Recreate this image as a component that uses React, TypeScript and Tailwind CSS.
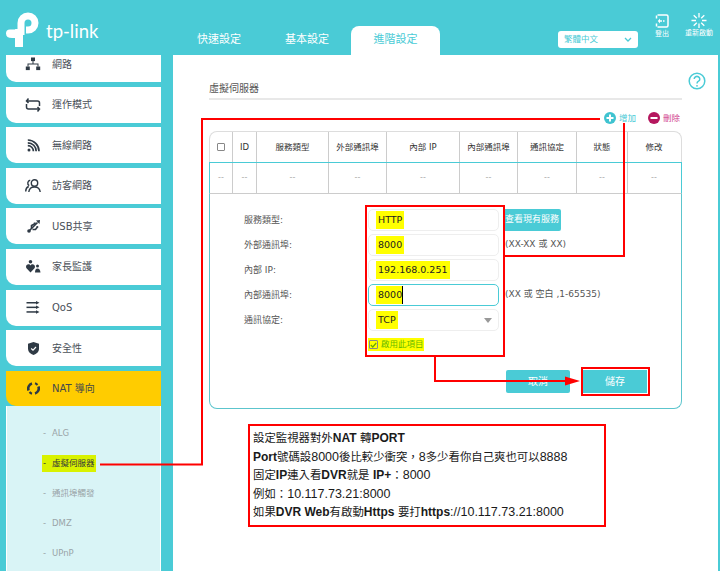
import React from "react";

const cjk = '"DejaVu Sans","Noto Sans CJK TC",sans-serif';

function NetIcon() {
  return (
    <svg width="16" height="14" viewBox="0 0 16 14" fill="#2f3a45">
      <rect x="6" y="0.5" width="4" height="3.6" />
      <rect x="0.8" y="9.5" width="4" height="3.6" />
      <rect x="11.2" y="9.5" width="4" height="3.6" />
      <path d="M7.5 4h1v2.5h5v3h-1v-2H3.5v2h-1v-3h5z" />
    </svg>
  );
}
function ModeIcon() {
  return (
    <svg width="16" height="14" viewBox="0 0 16 14" fill="none" stroke="#2f3a45" strokeWidth="1.5">
      <path d="M3.5 0.5 1.5 3l2 2M2 3h10.5q2 0 2 2v3" />
      <path d="M12.5 13.5l2-2.5-2-2M14 11H3.5q-2 0-2-2V6" />
    </svg>
  );
}
function WifiIcon() {
  return (
    <svg width="13" height="13" viewBox="0 0 13 13" fill="none" stroke="#2f3a45" strokeWidth="1.7">
      <circle cx="2" cy="11" r="1.5" fill="#2f3a45" stroke="none" />
      <path d="M0.8 6.6a5.6 5.6 0 0 1 5.6 5.6M0.8 3.8a8.4 8.4 0 0 1 8.4 8.4M0.8 1a11.2 11.2 0 0 1 11.2 11.2" />
    </svg>
  );
}
function GuestIcon() {
  return (
    <svg width="16" height="14" viewBox="0 0 16 14" fill="none" stroke="#2f3a45" strokeWidth="1.4">
      <circle cx="9.5" cy="4" r="3.2" />
      <path d="M3.8 13q0.5-5 5.7-5t5.7 5" />
      <path d="M5.2 1.2a3 3 0 0 0-1 5.5M0.7 12.5q0-3.8 3-5" />
    </svg>
  );
}
function UsbIcon() {
  return (
    <svg width="13" height="13" viewBox="0 0 13 13" fill="none" stroke="#2f3a45" strokeWidth="1.6">
      <circle cx="2" cy="11" r="1.8" fill="#2f3a45" stroke="none" />
      <path d="M2 11 10.500 2.500" />
      <path d="M4.500 8.500V5.500L7.500 4" />
      <path d="M5.500 9.500H8.500L10 7.500" />
      <path d="M9 0.500 13 0 12.500 4z" fill="#2f3a45" stroke="none" />
      <rect x="6.800" y="2.500" width="2" height="2" fill="#2f3a45" stroke="none" />
      <circle cx="10.300" cy="7" r="1.100" fill="#2f3a45" stroke="none" />
    </svg>
  );
}
function FamilyIcon() {
  return (
    <svg width="15" height="13" viewBox="0 0 15 13" fill="#2f3a45">
      <circle cx="4.500" cy="1.800" r="1.800" />
      <path d="M4.500 12.500 0.500 8.300C-0.700 6.600 0.500 4.300 2.500 4.300 3.500 4.300 4 4.800 4.500 5.500 5 4.800 5.600 4.300 6.500 4.300 8.500 4.300 9.700 6.600 8.500 8.300z" />
      <circle cx="11.500" cy="6" r="1.500" />
      <path d="M9 12.500q0-4 2.500-4t3 4z" />
    </svg>
  );
}
function QosIcon() {
  return (
    <svg width="14" height="13" viewBox="0 0 14 13" fill="#2f3a45">
      <rect x="0.500" y="1" width="10" height="1.500" />
      <path d="M10 0l3.500 1.700L10 3.400z" />
      <rect x="0.500" y="5.600" width="10" height="1.500" />
      <path d="M10 4.600l3.500 1.700L10 8z" />
      <rect x="0.500" y="10.200" width="10" height="1.500" />
      <path d="M10 9.300l3.500 1.700L10 12.700z" />
    </svg>
  );
}
function ShieldIcon() {
  return (
    <svg width="11" height="13" viewBox="0 0 11 13">
      <path d="M5.500 0 11 1.800v5.200C11 10 8.500 12 5.500 13 2.500 12 0 10 0 7V1.800z" fill="#2f3a45" />
      <path d="M3.200 6.500 5 8.200 8 5" fill="none" stroke="#fff" strokeWidth="1.200" />
    </svg>
  );
}
function NatIcon() {
  return (
    <svg width="13" height="13" viewBox="0 0 13 13" fill="none" stroke="#2f3a45" strokeWidth="2.600">
      <path d="M1.600 8.500A5.200 5.200 0 0 1 5 1.600" />
      <path d="M11.400 4.500A5.200 5.200 0 0 1 8 11.400" />
      <path d="M8 1.300 A5.200 5.200 0 0 1 10.500 3" strokeWidth="2" />
      <path d="M5 11.700A5.200 5.200 0 0 1 2.500 10" strokeWidth="2" />
    </svg>
  );
}

function SideItem({ icon, label }: { icon: React.ReactNode; label: React.ReactNode }) {
  return (
    <div className="h-9 w-[155px] shrink-0 bg-white rounded-bl-[10px] flex items-center text-[10px] text-[#4a5058]">
      <div className="w-[46px] pl-[10px] pr-[2px] flex justify-center shrink-0">{icon}</div>
      <span>{label}</span>
    </div>
  );
}

function Sub({ label, active }: { label: string; active?: boolean }) {
  return (
    <div className="h-[30px] flex items-center pl-[35px]">
      <div
        className={
          active
            ? "bg-[#d9f200] flex items-center h-[17px] pl-[1px] pr-[1px] text-[#33373a]"
            : "flex items-center pl-[1px] text-[#9aa4a8]"
        }
      >
        <span className="w-[9px]">-</span>
        <span>{label}</span>
      </div>
    </div>
  );
}

function Y({ children }: { children: React.ReactNode }) {
  return <span className="bg-[#ffff00] px-[2px] py-[1.500px] text-[#222]">{children}</span>;
}

function Row({ label, children, hint, focus }: { label: string; children: React.ReactNode; hint?: React.ReactNode; focus?: boolean }) {
  return (
    <div className="flex items-center h-[22px]">
      <div className="w-[125px] pl-[1px] pt-[1px] text-[9px] text-[#555]">{label}</div>
      <div
        className={
          focus
            ? "w-[131px] h-[22px] bg-white rounded-[5px] border border-[#4acbd6] flex items-center pl-[7px] text-[9.500px]"
            : "w-[131px] h-[22px] bg-white rounded-[5px] border border-[#eeeeee] flex items-center pl-[7px] text-[9.500px]"
        }
      >
        {children}
      </div>
      {hint}
    </div>
  );
}

function C({ children }: { children: React.ReactNode }) {
  return <span className="text-[11.400px]">{children}</span>;
}

function B({ children }: { children: React.ReactNode }) {
  return <b className="text-[12px]">{children}</b>;
}

const cols: [number, string][] = [
  [23, ""],
  [24, "ID"],
  [72, "服務類型"],
  [58, "外部通訊埠"],
  [73, "內部 IP"],
  [58, "內部通訊埠"],
  [59, "通訊協定"],
  [51, "狀態"],
  [52, "修改"],
];

export default function App() {
  return (
    <div className="relative w-[720px] h-[571px] overflow-hidden bg-[#4acbd6]" style={{ fontFamily: cjk }}>
      {/* header */}
      <div className="h-[55px] flex items-end">
        <div className="w-[175px] h-[55px] shrink-0 flex items-start pl-[6px] pt-[12px]">
          <svg width="36" height="36" viewBox="0 0 36 36" fill="none">
            <path d="M0 21.500q0-4 4-4h7.500v8.500H6q-6 0-6-4.500z" fill="#fff" />
            <path d="M20 18h2a7 7 0 1 0-7-7v12" stroke="#fff" strokeWidth="7" />
            <rect x="9" y="17" width="8" height="18" rx="0.500" fill="#fff" />
          </svg>
          <span className="ml-[4px] mt-[10px] text-white text-[18.500px] leading-[18px]" style={{ fontFamily: "Lato,sans-serif" }}>
            tp-link
          </span>
        </div>
        <div className="w-[88px] h-[29px] flex items-center justify-center text-white text-[11px]">快速設定</div>
        <div className="w-[88px] h-[29px] flex items-center justify-center text-white text-[11px]">基本設定</div>
        <div className="w-[89px] h-[29px] flex items-center justify-center bg-white rounded-t-[8px] text-[#4acbd6] text-[11px]">進階設定</div>
        <div className="w-[80px] h-[17px] ml-[118px] mb-[7px] bg-white rounded-[3px] flex items-center justify-between pl-[6px] pr-[6px] text-[#4acbd6] text-[8.500px]">
          <span>繁體中文</span>
          <svg width="8" height="5" viewBox="0 0 8 5" fill="none" stroke="#4acbd6" strokeWidth="1.300">
            <path d="M1 1l3 3 3-3" />
          </svg>
        </div>
        <div className="w-[48px] self-start pt-[14px] flex flex-col items-center text-white text-[7px] leading-[8px]">
          <svg width="14" height="14" viewBox="0 0 14 14" fill="none" stroke="#fff" strokeWidth="1.500">
            <path d="M2.500 1h9q1.500 0 1.500 1.500v9q0 1.500-1.500 1.500h-9" />
            <path d="M1.500 1.500v3M1.500 9.500v3" />
            <path d="M5 4.500 2.800 7 5 9.500z" fill="#fff" stroke="none" />
            <path d="M4.500 7H7M8 7h1.500" strokeWidth="1.300" />
          </svg>
          <span className="mt-[2px]">登出</span>
        </div>
        <div className="w-[26px] self-start pt-[13px] flex flex-col items-center text-white text-[7px] leading-[8px]">
          <svg width="16" height="15" viewBox="0 0 16 15" fill="none" stroke="#fff" strokeWidth="1.300">
            <path d="M8 0v4.500M8 10.500V15M0.500 7.500H5M11 7.500h4.500M2.700 2.200 5.800 5.300M10.200 9.700l3.100 3.100M13.300 2.200 10.200 5.300M5.800 9.700l-3.100 3.100" />
          </svg>
          <span className="mt-[1px] whitespace-nowrap">重新啟動</span>
        </div>
      </div>

      <div className="h-[516px] flex">
        {/* sidebar */}
        <div className="w-[173px] shrink-0 pl-[6px] flex flex-col gap-[4.600px]">
          <div className="h-[27px] w-[155px] shrink-0 bg-white rounded-bl-[10px] flex items-center pb-[9px] text-[10px] text-[#4a5058]">
            <div className="w-[46px] pl-[10px] pr-[2px] flex justify-center shrink-0">
              <NetIcon />
            </div>
            <span>網路</span>
          </div>
          <SideItem icon={<ModeIcon />} label="運作模式" />
          <SideItem icon={<WifiIcon />} label="無線網路" />
          <SideItem icon={<GuestIcon />} label="訪客網路" />
          <SideItem icon={<UsbIcon />} label="USB共享" />
          <SideItem icon={<FamilyIcon />} label="家長監護" />
          <SideItem icon={<QosIcon />} label="QoS" />
          <SideItem icon={<ShieldIcon />} label="安全性" />
          <div className="flex flex-col">
            <div className="h-[35px] w-[155px] bg-[#ffcc00] rounded-bl-[10px] flex items-center text-[10px] text-[#44484c]">
              <div className="w-[46px] pl-[10px] pr-[2px] flex justify-center shrink-0">
                <NatIcon />
              </div>
              <span>NAT 導向</span>
            </div>
            <div className="w-[155px] h-[200px] bg-[#d9f4f6] border-x border-white pt-[13px] text-[8.500px]">
              <Sub label="ALG" />
              <Sub label="虛擬伺服器" active />
              <Sub label="通訊埠觸發" />
              <Sub label="DMZ" />
              <Sub label="UPnP" />
            </div>
          </div>
        </div>

        {/* main */}
        <div className="w-[545px] shrink-0 bg-white pt-[17px] pl-[36px]">
          <div className="flex justify-end pr-[12px] h-[16px]">
            <svg width="18" height="18" viewBox="0 0 18 18" fill="none" stroke="#4acbd6" strokeWidth="1.500">
              <circle cx="9" cy="9" r="7.800" />
              <path d="M6.200 7a2.800 2.600 0 1 1 4.300 2.200Q9 10 9 11.500" />
              <circle cx="9" cy="13.800" r="0.900" fill="#4acbd6" stroke="none" />
            </svg>
          </div>
          <div className="-mt-[6px] w-[473px] h-[18px] border-b-2 border-[#e8e8e8] text-[10px] leading-[13px] text-[#555]">虛擬伺服器</div>
          <div className="w-[473px] h-[31px] pb-[7px] pr-[2px] flex items-end justify-end text-[8.500px] leading-[10px]">
            <svg width="12" height="12" viewBox="0 0 12 12" className="mr-[3px]">
              <circle cx="6" cy="6" r="6" fill="#3fc3d0" />
              <path d="M6 2.500v7M2.500 6h7" stroke="#fff" strokeWidth="2" />
            </svg>
            <span className="text-[#4acbd6] mr-[12px] mb-[1px]">增加</span>
            <svg width="12" height="12" viewBox="0 0 12 12" className="mr-[3px]">
              <circle cx="6" cy="6" r="6" fill="#b5175e" />
              <path d="M2.500 6h7" stroke="#fff" strokeWidth="2" />
            </svg>
            <span className="text-[#d0408a] mb-[1px]">刪除</span>
          </div>

          {/* table */}
          <div className="w-[473px] text-[8.500px] text-[#333]">
            <div className="flex h-[31px] border border-b-0 border-[#dddddd] rounded-t-[8px]">
              {cols.map(([w, t], i) => (
                <div
                  key={i}
                  className={i < 8 ? "border-r border-[#cccccc] flex items-center justify-center shrink-0" : "flex items-center justify-center shrink-0"}
                  style={{ width: w }}
                >
                  {i === 0 ? <div className="w-[8px] h-[8px] border border-[#888] rounded-[1px]" /> : t}
                </div>
              ))}
            </div>
            <div className="flex h-[32px] border border-[#4acbd6] border-b-[#cccccc] text-[#aaa] text-[8px]">
              {cols.map(([w], i) => (
                <div
                  key={i}
                  className={i < 8 ? "border-r border-[#cccccc] flex items-center justify-center shrink-0" : "flex items-center justify-center shrink-0"}
                  style={{ width: w }}
                >
                  --
                </div>
              ))}
            </div>
            <div className="border border-t-0 border-[#5cc5cd] rounded-b-[8px] pt-[15px] pb-[15px] pl-[33px] pr-[34px] text-[#222]">
              <div className="flex flex-col gap-[3px]">
                <Row
                  label="服務類型:"
                  hint={
                    <div className="ml-[4px] w-[58px] h-[22px] bg-[#4acbd6] rounded-[2px] text-white text-[9px] flex items-center justify-center whitespace-nowrap">查看現有服務</div>
                  }
                >
                  <Y>HTTP</Y>
                </Row>
                <Row label="外部通訊埠:" hint={<div className="ml-[6px] text-[9px] text-[#555] whitespace-nowrap">(XX-XX 或 XX)</div>}>
                  <Y>8000</Y>
                </Row>
                <Row label="內部 IP:">
                  <Y>192.168.0.251</Y>
                </Row>
                <Row label="內部通訊埠:" focus hint={<div className="ml-[6px] text-[9px] text-[#555] whitespace-nowrap">(XX 或 空白 ,1-65535)</div>}>
                  <span className="bg-[#ffff00] pl-[2px] py-[1.500px] border-r border-black text-[#222]">8000</span>
                </Row>
                <Row label="通訊協定:">
                  <div className="flex w-full items-center justify-between pr-[6px]">
                    <Y>TCP</Y>
                    <div className="w-0 h-0 border-x-[4px] border-x-transparent border-t-[5px] border-t-[#999]" />
                  </div>
                </Row>
              </div>
              <div className="mt-[7px] ml-[125px] w-[56px] h-[13px] bg-[#ffff00] flex items-center text-[#66bb00] text-[8.500px] whitespace-nowrap">
                <div className="w-[9px] h-[9px] ml-[1px] mr-[3px] border border-[#888] rounded-[1px] flex items-center justify-center">
                  <svg width="7" height="6" viewBox="0 0 7 6" fill="none" stroke="#66aa00" strokeWidth="1.200">
                    <path d="M0.800 3 2.800 5 6.200 1" />
                  </svg>
                </div>
                啟用此項目
              </div>
              <div className="mt-[19px] flex justify-end gap-[13px] text-white text-[10px]">
                <div className="w-[64px] h-[23px] bg-[#4acbd6] rounded-[2px] flex items-center justify-center">取消</div>
                <div className="w-[64px] h-[23px] bg-[#4acbd6] flex items-center justify-center">儲存</div>
              </div>
            </div>
          </div>

          {/* note */}
          <div
            className="mt-[15px] ml-[39px] w-[358px] h-[103px] bg-white border-2 border-[#ff0000] pl-[3px] pt-[3px] text-[12.500px] leading-[18.500px] text-[#1a1a1a]"
            style={{ fontFamily: '"Liberation Sans","Noto Sans CJK TC",sans-serif' }}
          >
            <div><C>設定監視器對外</C><B>NAT</B> <C>轉</C><B>PORT</B></div>
            <div><B>Port</B><C>號碼設</C>8000<C>後比較少衝突，</C>8<C>多少看你自己爽也可以</C>8888</div>
            <div><C>固定</C><B>IP</B><C>連入看</C><B>DVR</B><C>就是</C> <B>IP+</B><C>：</C>8000</div>
            <div><C>例如：</C>10.117.73.21:8000</div>
            <div><C>如果</C><B>DVR Web</B><C>有啟動</C><B>Https</B> <C>要打</C><B>https</B>://10.117.73.21:8000</div>
          </div>
        </div>
        <div className="flex-1" />
      </div>

      {/* annotation overlay */}
      <svg className="absolute left-0 top-0 pointer-events-none" width="720" height="571" viewBox="0 0 720 571" fill="none" stroke="#ff0000" strokeWidth="2">
        <path d="M100 464.500H202V119H600" />
        <path d="M624 123V256H504" />
        <rect x="366" y="206" width="138" height="150" />
        <path d="M435 356V381H566" />
        <path d="M565 376.500 580 381 565 385.500z" fill="#ff0000" stroke="none" />
        <rect x="582" y="368" width="67" height="27" />
      </svg>
    </div>
  );
}
